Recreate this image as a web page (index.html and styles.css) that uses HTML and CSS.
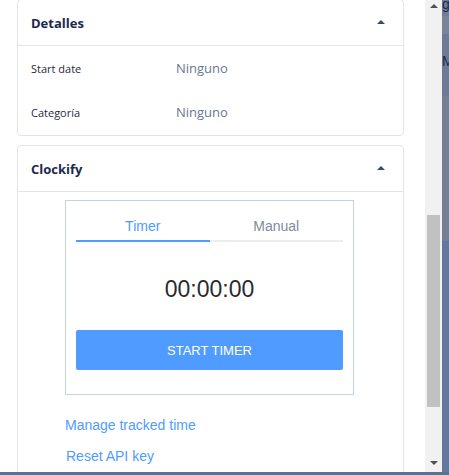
FILE: index.html
```html
<!DOCTYPE html>
<html lang="es">

<head>
    <meta charset="UTF-8">
    <meta name="viewport" content="width=device-width, initial-scale=1.0">
    <title>Clockify</title>
    <link rel="stylesheet" href="styles.css">
</head>

<body>
    <div class="frame">
        <div class="content">

            <div class="panel first">
                <div class="panel-head">
                    <span class="panel-title">Detalles</span>
                    <span class="caret"></span>
                </div>
                <div class="panel-body details">
                    <div class="row">
                        <span class="row-label">Start date</span>
                        <span class="row-value">Ninguno</span>
                    </div>
                    <div class="row">
                        <span class="row-label">Categoría</span>
                        <span class="row-value">Ninguno</span>
                    </div>
                </div>
            </div>

            <div class="panel open">
                <div class="panel-head">
                    <span class="panel-title">Clockify</span>
                    <span class="caret"></span>
                </div>
                <div class="panel-body clockify">
                    <div class="timer-box">
                        <div class="tabs">
                            <span class="tab active">Timer</span>
                            <span class="tab">Manual</span>
                        </div>
                        <div class="clock">00:00:00</div>
                        <button class="start">START TIMER</button>
                    </div>
                    <a class="link" href="#">Manage tracked time</a>
                    <a class="link reset" href="#">Reset API key</a>
                </div>
            </div>

        </div>

        <div class="scrollbar">
            <span class="arrow up"></span>
            <span class="thumb"></span>
            <span class="arrow down"></span>
        </div>

        <div class="edge">
            <span class="edge-band b1">g</span>
            <span class="edge-band b2"></span>
            <span class="edge-band b3">M</span>
            <span class="edge-band b4"></span>
            <span class="edge-band b5"></span>
        </div>
    </div>
    <div class="bottom-strip"></div>
</body>

</html>
```

FILE: styles.css
```css
body {
    margin: 0;
    background-color: #ffffff;
    font-family: "Liberation Sans", Arial, sans-serif;
    overflow: hidden;
}

.frame {
    display: flex;
    height: 472px;
}

.content {
    width: 425px;
    height: 472px;
    overflow: hidden;
    padding: 0 21px 0 17px;
    box-sizing: border-box;
}

.panel {
    border: 1px solid #e2e5ea;
    border-radius: 4px;
    background-color: #ffffff;
    margin-bottom: 9px;
}

.panel.first {
    margin-top: -1px;
}

.panel.open {
    height: 400px;
}

.panel-head {
    height: 45px;
    display: flex;
    align-items: center;
    justify-content: space-between;
    padding: 0 18px 0 13px;
    border-bottom: 1px solid #e2e5ea;
}

.panel-title {
    font-family: "Open Sans", sans-serif;
    font-weight: 700;
    font-size: 13px;
    color: #1b2a4c;
}

.caret {
    width: 0;
    height: 0;
    border-left: 4px solid transparent;
    border-right: 4px solid transparent;
    border-bottom: 4px solid #3b4a69;
    margin-top: -1px;
}

.details {
    padding-bottom: 1px;
}

.row {
    height: 44px;
    display: flex;
    align-items: center;
    padding-left: 13px;
}

.row-label {
    font-family: "Open Sans", sans-serif;
    font-size: 11px;
    color: #1f2a40;
    width: 145px;
}

.row-value {
    font-family: "Open Sans", sans-serif;
    font-size: 13px;
    color: #6a7790;
}

.clockify {
    padding: 8px 0 0 47px;
}

.timer-box {
    width: 289px;
    height: 195px;
    box-sizing: border-box;
    border: 1px solid #c7d3dc;
    padding: 17px 10px 0 10px;
}

.tabs {
    display: flex;
}

.tab {
    flex: 1;
    text-align: center;
    font-size: 14px;
    color: #808a9c;
    padding-bottom: 6px;
    border-bottom: 2px solid #ebedf1;
}

.tab.active {
    color: #4f9bff;
    border-bottom-color: #4f9bff;
}

.clock {
    text-align: center;
    font-size: 23px;
    color: #2b2b2b;
    margin-top: 34px;
    height: 27px;
}

.start {
    display: block;
    width: 100%;
    height: 40px;
    margin-top: 27px;
    border: 0;
    border-radius: 2px;
    background-color: #4f9bff;
    color: #ffffff;
    font-family: "Liberation Sans", Arial, sans-serif;
    font-size: 13px;
}

.link {
    display: block;
    color: #4f9bff;
    text-decoration: none;
    font-size: 14px;
    margin-top: 22px;
}

.link.reset {
    margin-top: 15px;
    padding-left: 1px;
}

.scrollbar {
    width: 17px;
    height: 472px;
    background-color: #f1f1f1;
    position: relative;
}

.arrow {
    position: absolute;
    left: 5px;
    width: 0;
    height: 0;
    border-left: 4px solid transparent;
    border-right: 4px solid transparent;
}

.arrow.up {
    top: 4px;
    border-bottom: 4px solid #505050;
}

.arrow.down {
    bottom: 7px;
    border-top: 4px solid #505050;
}

.thumb {
    position: absolute;
    left: 2px;
    top: 215px;
    width: 13px;
    height: 192px;
    background-color: #c1c1c1;
}

.edge {
    width: 7px;
    display: flex;
    flex-direction: column;
    overflow: hidden;
}

.edge-band {
    display: block;
    font-family: "Liberation Sans", Arial, sans-serif;
    font-size: 14px;
    color: #1b2a4c;
    line-height: 18px;
    white-space: nowrap;
}

.b1 {
    height: 21px;
    background-color: #6f7c95;
    margin-top: -5px;
}

.b2 {
    height: 18px;
    background-color: #7a8499;
}

.b3 {
    height: 62px;
    background-color: #6d7a96;
    padding-top: 18px;
    box-sizing: border-box;
}

.b4 {
    height: 145px;
    background-color: #747f95;
}

.b5 {
    flex: 1;
    background-color: #64789d;
}

.bottom-strip {
    height: 3px;
    background-color: #5f6f8f;
}
```
